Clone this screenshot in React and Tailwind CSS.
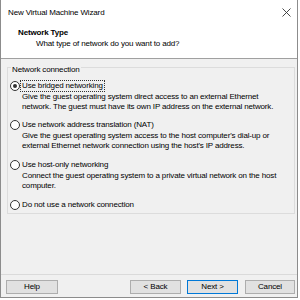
import React from 'react';

const Radio = ({ checked }) => (
    <span className="w-[10px] h-[10px] rounded-full border border-[#333333] bg-white flex items-center justify-center shrink-0">
        {checked && <span className="w-[4px] h-[4px] rounded-full bg-[#333333]" />}
    </span>
);

const Option = ({ label, checked, focused, lines, className }) => (
    <div className={className}>
        <div className="flex items-center h-[12px] pl-[2px]">
            <Radio checked={checked} />
            <span className={`ml-[1px] px-[1px] leading-[10px] ${focused ? 'outline outline-1 outline-dotted outline-[#333333]' : ''}`}>{label}</span>
        </div>
        {lines && (
            <div className="pl-[14px] leading-[10px]">
                {lines.map((l, i) => <div key={i}>{l}</div>)}
            </div>
        )}
    </div>
);

export default function App() {
    return (
        <div className="w-[300px] h-[300px] bg-white text-[8px] tracking-[-0.15px] text-black" style={{ fontFamily: '"Liberation Sans", Arial, sans-serif' }}>
            <div className="w-[298px] border-l border-r border-b border-[#8c8c8c] flex flex-col">
                {/* header */}
                <div className="h-[59px] shrink-0 bg-white border-b border-[#a0a0a0] relative">
                    <div className="pl-[7px] pt-[8px] leading-[10px]">New Virtual Machine Wizard</div>
                    <svg className="absolute right-[6px] top-[8px]" width="9" height="9" viewBox="0 0 9 9">
                        <path d="M0.5 0.5 L8.5 8.5 M8.5 0.5 L0.5 8.5" stroke="#333" strokeWidth="0.9" />
                    </svg>
                    <div className="pl-[17px] mt-[10px] leading-[10px] font-bold">Network Type</div>
                    <div className="pl-[35px] mt-[1px] leading-[10px]">What type of network do you want to add?</div>
                </div>
                {/* body */}
                <div className="bg-[#f0f0f0] flex flex-col">
                    <div className="ml-[6px] mt-[8px] w-[288px] h-[147px] border border-[#dcdcdc]">
                        <div className="ml-[3px] -mt-[3px] w-fit px-[1px] leading-[10px] bg-[#f0f0f0]">Network connection</div>
                        <Option
                            className="mt-[5px]"
                            checked
                            focused
                            label="Use bridged networking"
                            lines={[
                                'Give the guest operating system direct access to an external Ethernet',
                                'network. The guest must have its own IP address on the external network.',
                            ]}
                        />
                        <Option
                            className="mt-[7px]"
                            label="Use network address translation (NAT)"
                            lines={[
                                "Give the guest operating system access to the host computer's dial-up or",
                                "external Ethernet network connection using the host's IP address.",
                            ]}
                        />
                        <Option
                            className="mt-[8px]"
                            label="Use host-only networking"
                            lines={[
                                'Connect the guest operating system to a private virtual network on the host',
                                'computer.',
                            ]}
                        />
                        <Option className="mt-[8px]" label="Do not use a network connection" />
                    </div>
                    {/* footer */}
                    <div className="mt-[60px] border-t border-[#dadada] h-[23px] pt-[5px] flex">
                        <button className="ml-[5px] w-[52px] h-[14px] bg-[#e1e1e1] border border-[#adadad] leading-[12px]">Help</button>
                        <button className="ml-[72px] w-[51px] h-[14px] bg-[#e1e1e1] border border-[#adadad] leading-[12px]">&lt; Back</button>
                        <button className="ml-[6px] w-[51px] h-[14px] bg-[#e1e1e1] border border-[#0078d7] leading-[12px]">Next &gt;</button>
                        <button className="ml-[7px] w-[50px] h-[14px] bg-[#e1e1e1] border border-[#adadad] leading-[12px]">Cancel</button>
                    </div>
                </div>
            </div>
        </div>
    );
}
